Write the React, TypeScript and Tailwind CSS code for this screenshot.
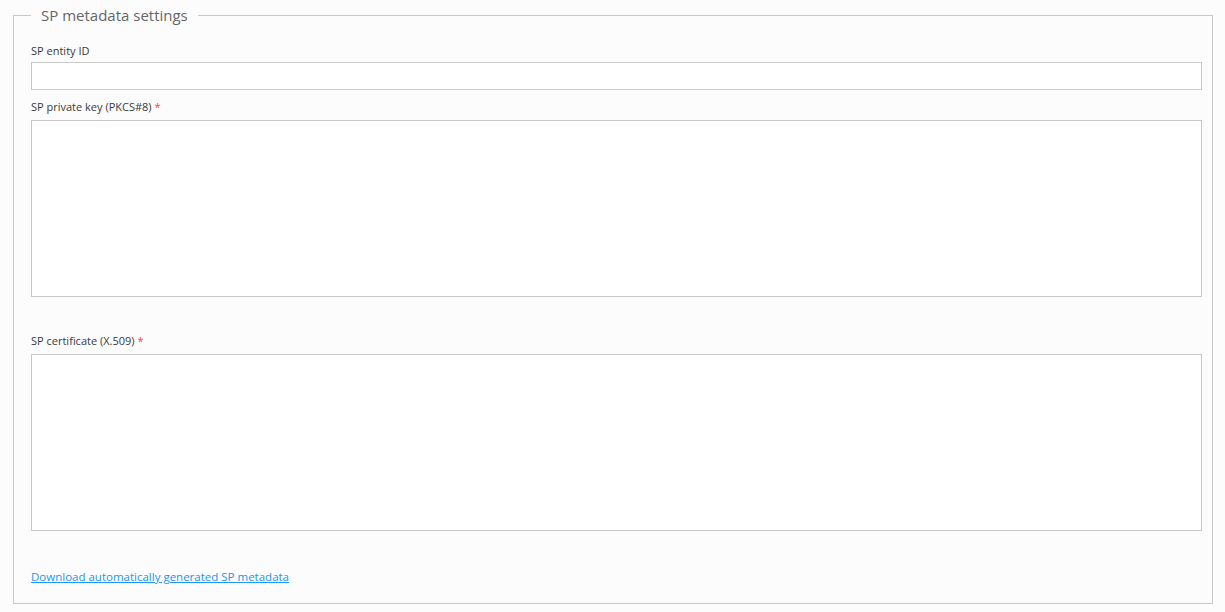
export default function App() {
  return (
    <div className="min-h-[612px] bg-[#fcfcfc] pt-[4px] font-['Open_Sans',sans-serif]">
      <fieldset className="mx-[13px] w-[1200px] border border-[#c8c8c8] pl-[17px] pr-[10px] pb-[18px]">
        <legend className="px-[10px] text-[15px] leading-[22px] text-[#666]">SP metadata settings</legend>

        <div className="pt-[17px]">
          <label className="block text-[11px] leading-[16px] text-[#3a3a3a]">SP entity ID</label>
          <input
            type="text"
            className="mt-[3px] block h-[28px] w-full border border-[#c8c8c8] bg-white outline-none"
          />

          <label className="mt-[9px] block text-[11px] leading-[16px] text-[#3a3a3a]">
            SP private key (PKCS#8) <span className="text-[#f44336]">*</span>
          </label>
          <textarea className="mt-[5px] block h-[177px] w-full resize-none border border-[#c8c8c8] bg-white outline-none" />

          <label className="mt-[36px] block text-[11px] leading-[16px] text-[#3a3a3a]">
            SP certificate (X.509) <span className="text-[#f44336]">*</span>
          </label>
          <textarea className="mt-[5px] block h-[177px] w-full resize-none border border-[#c8c8c8] bg-white outline-none" />

          <a href="#" className="mt-[38px] block w-fit text-[11.5px] leading-[16px] text-[#2196f3] underline">
            Download automatically generated SP metadata
          </a>
        </div>
      </fieldset>
    </div>
  );
}
